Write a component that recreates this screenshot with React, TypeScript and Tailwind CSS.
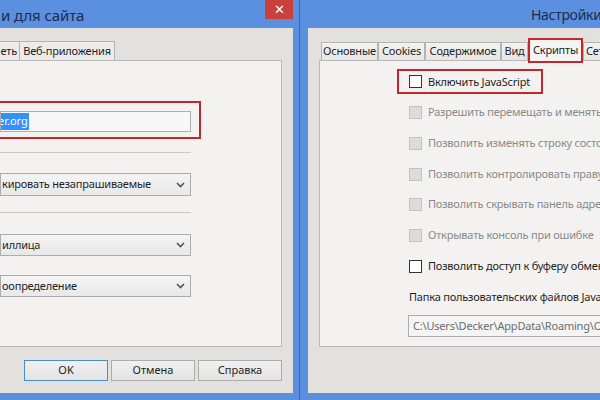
import React from "react";

const FONT = { fontFamily: '"Noto Sans", "Open Sans", sans-serif' };

function Chevron() {
  return (
    <svg width="9" height="6" viewBox="0 0 9 6" className="shrink-0">
      <path d="M1 1 L4.5 4.5 L8 1" fill="none" stroke="#555" strokeWidth="1.6" />
    </svg>
  );
}

function Select({ text, h = 22 }: { text: string; h?: number }) {
  return (
    <div
      className="flex w-[191px] items-center justify-between border border-[#acacac] bg-gradient-to-b from-[#f4f4f4] to-[#e8e8e8] pr-[5px] pl-[1px] text-[11px] tracking-[-0.2px] text-[#1f1f1f]"
      style={{ height: h }}
    >
      <span className="whitespace-nowrap">{text}</span>
      <Chevron />
    </div>
  );
}

function Checkbox({ label, disabled }: { label: string; disabled?: boolean }) {
  return (
    <div className="flex h-[30.7px] items-center gap-[6px] whitespace-nowrap">
      <span
        className={
          disabled
            ? "h-[13px] w-[13px] shrink-0 border border-[#c2c2c2] bg-[#dcdcdc]"
            : "h-[13px] w-[13px] shrink-0 border border-[#333] bg-white"
        }
      />
      <span
        className={
          disabled
            ? "text-[11px] tracking-[-0.2px] text-[#8a8a8a]"
            : "text-[11px] tracking-[-0.2px] text-[#1f1f1f]"
        }
      >
        {label}
      </span>
    </div>
  );
}

function Button({ label, primary }: { label: string; primary?: boolean }) {
  return (
    <div
      className={
        primary
          ? "flex h-[21px] w-[84px] items-center justify-center border border-[#4d8ccb] bg-gradient-to-b from-[#f0f0f0] to-[#e3e3e3] text-[11px] text-[#1f1f1f]"
          : "flex h-[21px] w-[84px] items-center justify-center border border-[#acacac] bg-gradient-to-b from-[#f0f0f0] to-[#e3e3e3] text-[11px] text-[#1f1f1f]"
      }
    >
      {label}
    </div>
  );
}

function LeftWindow() {
  return (
    <div className="flex w-[299px] shrink-0 flex-col">
      <div className="flex h-[28px] shrink-0 items-start justify-between">
        <span className="mt-[4px] ml-[1px] text-[15px] tracking-[-0.1px] text-[#1d2d4a] whitespace-nowrap">
          и для сайта
        </span>
        <div className="mr-[6px] flex h-[19px] w-[28px] items-center justify-center bg-[#c8413b] text-[13px] leading-none text-white">
          ✕
        </div>
      </div>
      <div className="mr-[6px] mb-[7px] flex flex-1 flex-col bg-[#e3e1de] pt-[12px] pr-[11px]">
        <div className="flex h-[20px] items-end">
          <div className="flex h-[19px] w-[20px] items-center justify-end border-t border-r border-[#b4b4b4] bg-[#ecebea] pr-[2px] text-[11px] tracking-[-0.2px] text-[#1f1f1f]">
            еть
          </div>
          <div className="flex h-[19px] w-[95px] items-center justify-center border-t border-r border-[#b4b4b4] bg-[#ecebea] text-[11px] tracking-[-0.2px] text-[#1f1f1f] whitespace-nowrap">
            Веб-приложения
          </div>
        </div>
        <div className="flex h-[287px] flex-col border-t border-r border-b border-[#b9b9b9] bg-[#f3f2f0]">
          <div className="mt-[40px] -ml-[10px] w-[211px] border-2 border-[#c3272b] pt-[8px] pr-[8px] pb-[5px] pl-[8px]">
            <div className="flex h-[21px] items-center overflow-hidden border border-[#adadad] bg-[#f7f7f7] text-[11px]">
              <span className="-ml-[3px] bg-[#3390ff] pr-[1px] text-white">er.org</span>
            </div>
          </div>
          <div className="mt-[13px] h-px w-[191px] bg-[#c9c9c9]" />
          <div className="mt-[20px]">
            <Select text="кировать незапрашиваемые" h={23} />
          </div>
          <div className="mt-[16px] h-px w-[191px] bg-[#c9c9c9]" />
          <div className="mt-[21px]">
            <Select text="иллица" />
          </div>
          <div className="mt-[19px]">
            <Select text="оопределение" />
          </div>
        </div>
        <div className="mt-[13px] flex justify-end gap-[3px]">
          <Button label="OK" primary />
          <Button label="Отмена" />
          <Button label="Справка" />
        </div>
      </div>
    </div>
  );
}

function Tab({ label, w }: { label: string; w: number }) {
  return (
    <div
      className="flex h-[18px] shrink-0 items-center justify-center border-t border-r border-l border-[#b4b4b4] bg-gradient-to-b from-[#f2f2f2] to-[#e6e6e6] text-[11px] tracking-[-0.2px] text-[#1f1f1f] whitespace-nowrap"
      style={{ width: w }}
    >
      {label}
    </div>
  );
}

function RightWindow() {
  return (
    <div className="flex w-[300px] shrink-0 flex-col overflow-hidden">
      <div className="flex h-[28px] shrink-0 items-start pl-[231px]">
        <span className="mt-[4px] text-[14px] tracking-[-0.3px] text-[#1d2d4a] whitespace-nowrap">Настройки</span>
      </div>
      <div className="mb-[7px] ml-[8px] flex w-[420px] flex-1 flex-col bg-[#e3e1de] pt-[10px] pl-[11px]">
        <div className="flex h-[22px] items-end pl-[2px]">
          <Tab label="Основные" w={57} />
          <Tab label="Cookies" w={47} />
          <Tab label="Содержимое" w={76} />
          <Tab label="Вид" w={27} />
          <div className="relative z-10 -mb-[3px] flex h-[25px] w-[55px] shrink-0 items-start justify-center border-2 border-[#c3272b] bg-[#f5f4f2] pt-[2px] text-[11px] tracking-[-0.2px] text-[#1f1f1f]">
            Скрипты
          </div>
          <div className="flex h-[18px] w-[60px] shrink-0 items-center border-t border-l border-[#b4b4b4] bg-gradient-to-b from-[#f2f2f2] to-[#e6e6e6] pl-[2px] text-[11px] tracking-[-0.2px] text-[#1f1f1f]">
            Сети
          </div>
        </div>
        <div className="flex h-[287px] flex-col border border-[#b9b9b9] bg-[#f3f2f0] pt-[5.6px] pl-[89px]">
          <div className="flex h-[30.7px] items-center">
            <div className="-ml-[12px] flex h-[25px] items-center gap-[6px] border-2 border-[#c3272b] pr-[11px] pl-[10px] whitespace-nowrap">
              <span className="h-[13px] w-[13px] shrink-0 border border-[#333] bg-white" />
              <span className="text-[11px] tracking-[-0.2px] text-[#1f1f1f]">Включить JavaScript</span>
            </div>
          </div>
          <Checkbox label="Разрешить перемещать и менять размер окон" disabled />
          <Checkbox label="Позволить изменять строку состояния" disabled />
          <Checkbox label="Позволить контролировать правую кнопку мыши" disabled />
          <Checkbox label="Позволить скрывать панель адреса" disabled />
          <Checkbox label="Открывать консоль при ошибке" disabled />
          <Checkbox label="Позволить доступ к буферу обмена" />
          <div className="mt-[8px] h-[16px] text-[11px] leading-[16px] tracking-[-0.2px] text-[#1f1f1f] whitespace-nowrap">
            Папка пользовательских файлов JavaScript
          </div>
          <div className="mt-[10px] -ml-[1px] flex h-[22px] items-center border border-[#adadad] bg-[#f4f4f4] pl-[4px] text-[11px] tracking-[-0.2px] text-[#6d6d6d] whitespace-nowrap">
            C:\Users\Decker\AppData\Roaming\Opera\Opera\scripts
          </div>
        </div>
      </div>
    </div>
  );
}

export default function App() {
  return (
    <div className="flex h-[400px] w-[600px] overflow-hidden bg-[#5b8fdf]" style={FONT}>
      <LeftWindow />
      <div className="w-px shrink-0 bg-[#3a66ad]" />
      <RightWindow />
    </div>
  );
}
